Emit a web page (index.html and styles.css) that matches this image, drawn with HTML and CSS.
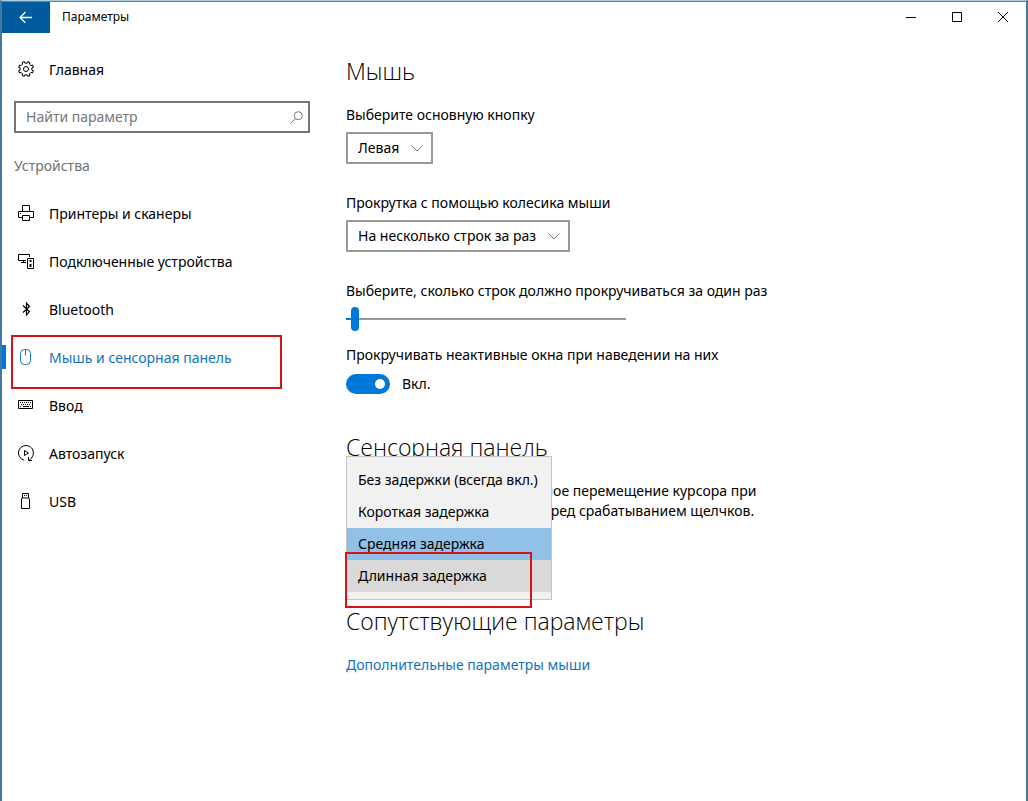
FILE: index.html
```html
<!DOCTYPE html>
<html lang="ru">
<head>
    <meta charset="UTF-8">
    <meta name="viewport" content="width=device-width, initial-scale=1.0">
    <title>Параметры</title>
    <link rel="stylesheet" href="styles.css">
</head>
<body>
    <header class="titlebar">
        <button class="back" aria-label="Назад">
            <svg width="14" height="12" viewBox="0 0 14 12"><path stroke-width="1.3" d="M13 6.5H1M6.5 1L1 6.5 6.5 12"/></svg>
        </button>
        <h1>Параметры</h1>
        <div class="window-buttons">
            <button aria-label="Свернуть">
                <svg width="10" height="10" viewBox="0 0 10 10"><path d="M0 5.5h10"/></svg>
            </button>
            <button aria-label="Развернуть">
                <svg width="10" height="10" viewBox="0 0 10 10"><path d="M.5.5h9v9h-9z"/></svg>
            </button>
            <button aria-label="Закрыть">
                <svg width="10" height="10" viewBox="0 0 10 10"><path d="M0 0l10 10M10 0L0 10"/></svg>
            </button>
        </div>
    </header>

    <div class="layout">
        <nav class="sidebar">
            <a class="item" href="#home">
                <svg width="16" height="16" viewBox="0 0 16 16"><path d="M6.3.6l.5 1.5h2.4L9.7.6l2.3 1-.7 1.4L13 4.700l1.400-.7 1 2.300-1.500.5v2.400l1.500.5-1 2.300-1.400-.7-1.700 1.700.7 1.400-2.300 1-.5-1.500H6.800l-.5 1.500-2.300-1 .7-1.400L3 11.300l-1.400.7-1-2.300 1.500-.5V6.800L.6 6.300l1-2.300 1.400.7L4.700 3 4 1.600z"/><circle cx="8" cy="8" r="2.5"/></svg>
                Главная
            </a>
            <div class="search">
                <input type="text" placeholder="Найти параметр" aria-label="Найти параметр">
                <svg width="13" height="13" viewBox="0 0 13 13"><circle cx="8.3" cy="4.7" r="4"/><path d="M5.4 7.6L.5 12.5"/></svg>
            </div>
            <h2 class="group">Устройства</h2>
            <a class="item" href="#printers">
                <svg width="16" height="16" viewBox="0 0 16 16"><path d="M4.5 6V.5h7V6M4.5 12.5h-4v-6h15v6h-4M4.5 10.5h7v5h-7zM2 8.5h1"/></svg>
                Принтеры и сканеры
            </a>
            <a class="item" href="#devices">
                <svg width="16" height="16" viewBox="0 0 16 16"><path d="M8 7.5H.5v-6h11V4M3 9.5h5M5.5 7.5v2M9.5 5.5h6v10h-6zM12 8h1"/><path stroke-width="2" d="M12.5 7v2M12.5 11v3"/></svg>
                Подключенные устройства
            </a>
            <a class="item" href="#bluetooth">
                <svg width="16" height="16" viewBox="0 0 16 16"><path stroke-width="1.2" d="M5 4.5l6.500 6-3 3.500V2l3 3.500-6.500 6"/></svg>
                Bluetooth
            </a>
            <a class="item active" href="#mouse">
                <svg width="16" height="16" viewBox="0 0 16 16"><rect x="2.5" y=".5" width="10" height="15" rx="4"/><path d="M7.5.5v6"/></svg>
                Мышь и сенсорная панель
            </a>
            <a class="item" href="#typing">
                <svg width="16" height="16" viewBox="0 0 16 16"><path d="M.5 3.5h14v8H.5z"/><path stroke-dasharray="1 1" d="M2 5.5h11M3 7.5h10M2 9.5h2M12 9.5h1"/><path d="M5 9.5h6"/></svg>
                Ввод
            </a>
            <a class="item" href="#autoplay">
                <svg width="16" height="16" viewBox="0 0 16 16"><path d="M6 15.200A7.500 7.500 0 1 1 13.500 13l-2.500 2.500M10.500 12v3.500H14M6.500 5.500v5L10.500 8z"/></svg>
                Автозапуск
            </a>
            <a class="item" href="#usb">
                <svg width="16" height="16" viewBox="0 0 16 16"><path d="M3.500 6q0-1 1-1h6q1 0 1 1v9.500h-8zM4.500 5V.5h6V5M6 2.500h1M8 2.500h1"/></svg>
                USB
            </a>
        </nav>

        <main class="content">
            <h2>Мышь</h2>
            <div class="field">
                <label for="button">Выберите основную кнопку</label>
                <div class="dropdown">
                    <select id="button"><option>Левая</option></select>
                    <svg width="12" height="7" viewBox="0 0 12 7"><path d="M.5.5L6 6 11.5.5"/></svg>
                </div>
            </div>
            <div class="field">
                <label for="wheel">Прокрутка с помощью колесика мыши</label>
                <div class="dropdown">
                    <select id="wheel"><option>На несколько строк за раз</option></select>
                    <svg width="12" height="7" viewBox="0 0 12 7"><path d="M.5.5L6 6 11.5.5"/></svg>
                </div>
            </div>
            <div class="field compact">
                <label for="lines">Выберите, сколько строк должно прокручиваться за один раз</label>
                <input type="range" id="lines" min="1" max="100" value="3">
            </div>
            <div class="field">
                <label for="inactive">Прокручивать неактивные окна при наведении на них</label>
                <div class="switch">
                    <input type="checkbox" id="inactive" role="switch" checked>
                    <span>Вкл.</span>
                </div>
            </div>

            <h2>Сенсорная панель</h2>
            <div class="delay">
                <p id="delay-label">Чтобы предотвратить случайное перемещение курсора при<br>вводе, настройте задержку перед срабатыванием щелчков.</p>
                <div class="options" role="listbox" aria-labelledby="delay-label">
                    <button role="option">Без задержки (всегда вкл.)</button>
                    <button role="option">Короткая задержка</button>
                    <button role="option" class="selected" aria-selected="true">Средняя задержка</button>
                    <button role="option" class="hovered">Длинная задержка</button>
                </div>
            </div>

            <h2>Сопутствующие параметры</h2>
            <a class="link" href="#mouse-options">Дополнительные параметры мыши</a>
        </main>
    </div>
</body>
</html>
```
FILE: styles.css
```css
:root {
    --accent: #0078d7;
    --link: #1373bd;
    --border: #999;
    --mark: #d31519;
}

*, *::before, *::after {
    box-sizing: border-box;
}

body {
    margin: 0;
    min-height: 100vh;
    border: 2px solid #44769f;
    border-top: 1px solid #a9cbe0;
    border-bottom: none;
    background-color: #fff;
    color: #000;
    font-family: "Noto Sans", "Open Sans", sans-serif;
    font-size: 14px;
    line-height: 20px;
}

button, input, select {
    font: inherit;
    color: inherit;
}

svg {
    display: block;
    flex: none;
    fill: none;
    stroke: currentColor;
}

/* title bar */
.titlebar {
    display: flex;
    height: 32px;
    border-top: 1px solid #4b8ab5;
}

.titlebar h1 {
    flex: 1;
    margin: 0 12px;
    font-size: 12px;
    font-weight: normal;
    line-height: 30px;
}

.titlebar button {
    display: flex;
    align-items: center;
    justify-content: center;
    width: 46px;
    padding: 0 0 2px;
    border: none;
    background: none;
}

.titlebar .back {
    width: 48px;
    background-color: #005a9e;
    color: #fff;
}

.window-buttons {
    display: flex;
}

.layout {
    display: flex;
}

/* left column */
.sidebar {
    flex: none;
    width: 344px;
    padding-top: 13px;
}

.item {
    position: relative;
    display: flex;
    align-items: center;
    gap: 15px;
    height: 48px;
    padding-left: 16px;
    color: inherit;
    text-decoration: none;
}

.item svg {
    margin-bottom: 2px;
}

.search {
    display: flex;
    align-items: center;
    width: 296px;
    height: 32px;
    margin: 7px 0 9px 12px;
    padding: 0 5px 0 10px;
    border: 2px solid #767676;
    color: #767676;
}

.search input {
    flex: 1;
    min-width: 0;
    padding: 0;
    border: none;
    outline: none;
    background: none;
}

.search input::placeholder {
    color: #767676;
}

.group {
    margin: 0 12px;
    color: #707070;
    font-size: 14px;
    font-weight: normal;
    line-height: 48px;
}

.item.active {
    color: var(--link);
}

.active::before {
    content: "";
    position: absolute;
    left: 0;
    top: 11px;
    width: 4px;
    height: 24px;
    background-color: var(--accent);
}

.active::after {
    content: "";
    position: absolute;
    left: 9px;
    top: 1px;
    width: 271px;
    height: 54px;
    border: 2px solid var(--mark);
}

/* settings */
.content {
    flex: 1;
    padding: 22px 24px 24px 0;
}

.content h2 {
    margin: 0 0 18px;
    font-family: "Open Sans", "Noto Sans", sans-serif;
    font-size: 23px;
    font-weight: 300;
    line-height: 32px;
}

.field {
    display: flex;
    flex-direction: column;
    align-items: flex-start;
    gap: 7px;
    margin-bottom: 29px;
}

.compact {
    gap: 6px;
    margin-bottom: 14px;
}

.dropdown {
    position: relative;
}

.dropdown select {
    appearance: none;
    height: 32px;
    padding: 0 31px 0 10px;
    border: 2px solid var(--border);
    border-radius: 0;
    background-color: #fff;
}

.dropdown svg {
    position: absolute;
    right: 10px;
    top: 13px;
    color: #777;
    pointer-events: none;
}

input[type="range"] {
    appearance: none;
    width: 280px;
    height: 24px;
    margin: 0;
    background: linear-gradient(to right, var(--accent) 2%, var(--border) 2%) center / 100% 2px no-repeat;
}

input[type="range"]::-webkit-slider-thumb {
    appearance: none;
    width: 8px;
    height: 24px;
    border-radius: 4px;
    background-color: var(--accent);
}

.switch {
    display: flex;
    align-items: center;
    gap: 12px;
}

.switch input {
    appearance: none;
    width: 44px;
    height: 20px;
    margin: 0;
    padding: 5px;
    border-radius: 10px;
    background-color: #999;
}

.switch input::before {
    content: "";
    display: block;
    width: 10px;
    height: 10px;
    border-radius: 50%;
    background-color: #fff;
}

.switch input:checked {
    background-color: var(--accent);
}

.switch input:checked::before {
    margin-left: auto;
}

.field:has(.switch) {
    gap: 9px;
    margin-bottom: 37px;
}

.delay {
    position: relative;
    min-height: 124px;
}

.delay p {
    margin: 0;
}

/* opened list lies over the heading and the text */
.options {
    position: absolute;
    left: 0;
    top: -25px;
    display: flex;
    flex-direction: column;
    width: 206px;
    padding: 7px 0;
    border: 1px solid #c5c5c5;
    background-color: #f1f1f1;
}

.options button {
    height: 32px;
    padding: 0 11px;
    border: none;
    background: none;
    text-align: left;
    white-space: nowrap;
}

.options .selected {
    background-color: #91c1e7;
}

.options .hovered {
    background-color: #d9d9d9;
}

.options::after {
    content: "";
    position: absolute;
    left: -2px;
    top: 95px;
    width: 187px;
    height: 56px;
    border: 2px solid var(--mark);
    pointer-events: none;
}

.link {
    color: var(--link);
    text-decoration: none;
}
```
